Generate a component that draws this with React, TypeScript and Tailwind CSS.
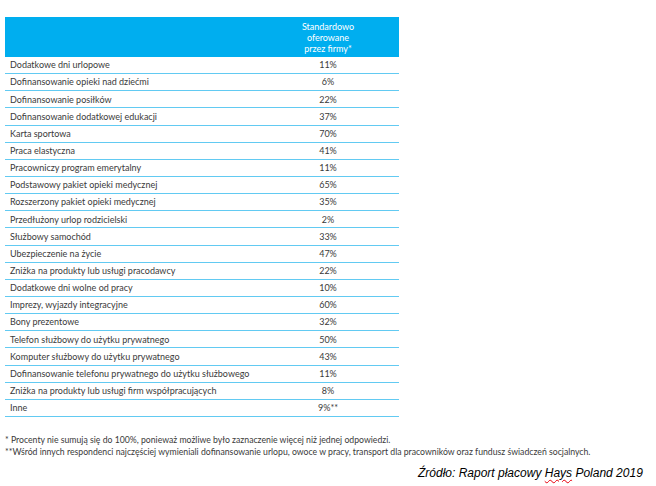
const rows: [string, string][] = [
  ["Dodatkowe dni urlopowe", "11%"],
  ["Dofinansowanie opieki nad dziećmi", "6%"],
  ["Dofinansowanie posiłków", "22%"],
  ["Dofinansowanie dodatkowej edukacji", "37%"],
  ["Karta sportowa", "70%"],
  ["Praca elastyczna", "41%"],
  ["Pracowniczy program emerytalny", "11%"],
  ["Podstawowy pakiet opieki medycznej", "65%"],
  ["Rozszerzony pakiet opieki medycznej", "35%"],
  ["Przedłużony urlop rodzicielski", "2%"],
  ["Służbowy samochód", "33%"],
  ["Ubezpieczenie na życie", "47%"],
  ["Zniżka na produkty lub usługi pracodawcy", "22%"],
  ["Dodatkowe dni wolne od pracy", "10%"],
  ["Imprezy, wyjazdy integracyjne", "60%"],
  ["Bony prezentowe", "32%"],
  ["Telefon służbowy do użytku prywatnego", "50%"],
  ["Komputer służbowy do użytku prywatnego", "43%"],
  ["Dofinansowanie telefonu prywatnego do użytku służbowego", "11%"],
  ["Zniżka na produkty lub usługi firm współpracujących", "8%"],
  ["Inne", "9%**"],
];

export default function App() {
  return (
    <div className="w-[656px] h-[486px] bg-white font-['Lato',sans-serif] text-[#3a3a3a] pt-[17px] relative">
      {/* Table */}
      <div className="ml-[5px] w-[394px]">
        <div className="h-[40px] bg-[#00aeef] flex">
          <div className="flex-1" />
          <div className="w-[130px] mr-[6px] flex items-center justify-center text-center text-white text-[9px] leading-[11px]">
            Standardowo
            <br />
            oferowane
            <br />
            przez firmy*
          </div>
        </div>
        {rows.map(([label, value]) => (
          <div
            key={label}
            className="h-[17.15px] flex items-center border-b-[1.5px] border-[#62caf2] text-[9px]"
          >
            <div className="flex-1 pl-[5px] truncate">{label}</div>
            <div className="w-[130px] mr-[6px] text-center">{value}</div>
          </div>
        ))}
      </div>

      {/* Footnotes */}
      <div className="mt-[17px] ml-[5px] text-[8.7px] leading-[12.5px] text-[#3a3a3a] whitespace-nowrap">
        <p>* Procenty nie sumują się do 100%, ponieważ możliwe było zaznaczenie więcej niż jednej odpowiedzi.</p>
        <p>**Wśród innych respondenci najczęściej wymieniali dofinansowanie urlopu, owoce w pracy, transport dla pracowników oraz fundusz świadczeń socjalnych.</p>
      </div>

      {/* Source */}
      <div className="mt-[5px] ml-[418px] font-['Liberation_Sans',Arial,sans-serif] italic text-[12px] text-black whitespace-nowrap">
        Źródło: Raport płacowy{" "}
        <span className="underline decoration-wavy decoration-red-600 decoration-[1px] underline-offset-2">Hays</span>{" "}
        Poland 2019
      </div>
    </div>
  );
}
